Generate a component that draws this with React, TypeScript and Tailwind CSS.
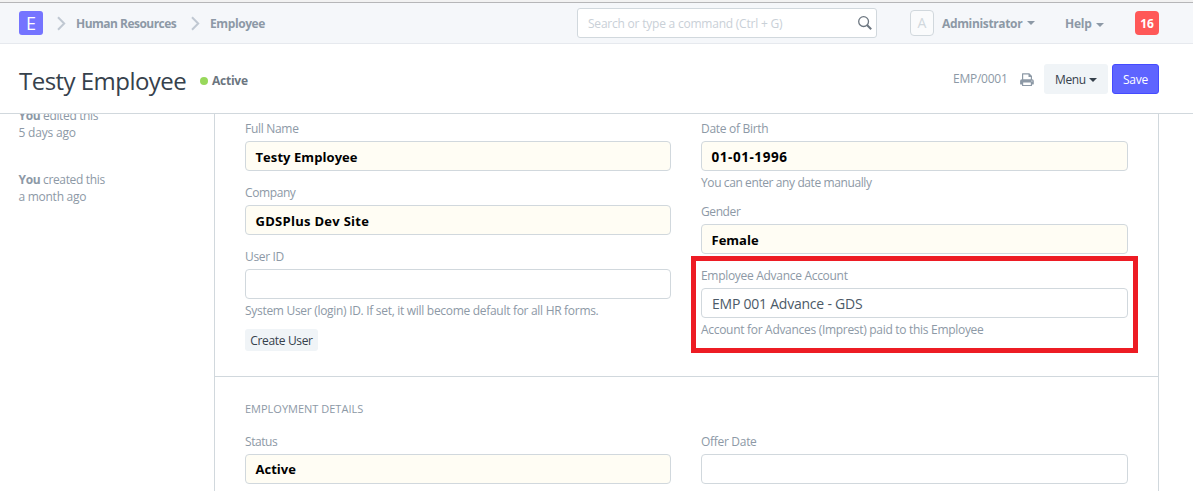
import type { ReactNode } from 'react';

function Chevron() {
  return (
    <svg width="9" height="15" viewBox="0 0 9 15" fill="none" stroke="#c0c8d2" strokeWidth="2">
      <path d="M1 1.2 L7.2 7.5 L1 13.8" />
    </svg>
  );
}

function Caret({ className }: { className: string }) {
  return (
    <svg className={className} width="8" height="4" viewBox="0 0 8 4" fill="currentColor">
      <path d="M0 0H8L4 4Z" />
    </svg>
  );
}

function PrinterIcon() {
  return (
    <svg width="14" height="14" viewBox="0 0 14 14" fill="#8d99a6">
      <path
        fillRule="evenodd"
        d="M2 0.8 Q2 0.3 2.5 0.3 H9.3 L12 3 V6.2 Q13.8 6.3 13.8 8 V11 Q13.8 11.4 13.4 11.4 H12 V12.6 Q12 13.1 11.5 13.1 H2.5 Q2 13.1 2 12.6 V11.4 H0.5 Q0.1 11.4 0.1 11 V8 Q0.1 6.3 2 6.2 Z M3.2 1.5 V6.3 H10.8 V3.9 H8.5 V1.5 Z M3.2 9.6 V11.9 H10.8 V9.6 Z M11.9 7.4 A0.6 0.6 0 1 0 11.9 8.6 A0.6 0.6 0 1 0 11.9 7.4 Z"
      />
    </svg>
  );
}

function SearchIcon() {
  return (
    <svg width="14" height="14" viewBox="0 0 14 14" fill="none" stroke="#6c7680">
      <circle cx="5.6" cy="5.6" r="4.9" strokeWidth="1.3" />
      <path d="M9 9L13.2 13.2" strokeWidth="2" />
    </svg>
  );
}

type FieldProps = {
  label: string;
  labelClass?: string;
  value?: string;
  valueClass?: string;
  bold?: boolean;
  help?: string;
  helpClass?: string;
  children?: ReactNode;
};

function Field({
  label,
  labelClass = 'tracking-[-0.3px]',
  value,
  valueClass = '',
  bold,
  help,
  helpClass = 'tracking-[-0.3px]',
  children,
}: FieldProps) {
  return (
    <div className="flex flex-col items-stretch">
      <div className="mb-1 h-[18px] text-xs leading-[19px] text-[#8d99a6]">
        <span className={labelClass}>{label}</span>
      </div>
      <div
        className={
          bold
            ? 'flex h-[30px] items-center rounded border border-[#d1d8dd] bg-[#fffdf4] px-[9.5px] pt-0.5 text-[13px] leading-[18px] font-bold text-black'
            : 'flex h-[30px] items-center rounded border border-[#d1d8dd] bg-white px-2.5 pt-0.5 text-[13.5px] leading-[18px] text-[#4c5a67]'
        }
      >
        <span className={valueClass}>{value}</span>
      </div>
      {help && (
        <div className="mt-[3px] h-[18px] text-xs leading-[18px] whitespace-nowrap text-[#8d99a6]">
          <span className={helpClass}>{help}</span>
        </div>
      )}
      {children}
    </div>
  );
}

export default function App() {
  return (
    <div className="flex h-[491px] w-[1193px] flex-col overflow-hidden bg-white font-['Open_Sans','Noto_Sans',sans-serif] text-xs leading-[17px] text-[#8d99a6]">
      <div className="h-[3px] shrink-0 border-b border-[#b6b6b8] bg-[#f2f2f2]" />
      <nav className="flex h-[41px] shrink-0 items-center border-b border-[#e6e9ee] bg-[#f5f7fa] pl-[19px] font-semibold">
        <div className="flex h-6 w-6 items-center justify-center rounded-[3px] bg-[#7574ff] text-[18px] leading-6 font-medium text-white">
          <span>E</span>
        </div>
        <div className="ml-[14px] flex">
          <Chevron />
        </div>
        <span className="mt-px ml-[10px] w-[102px] font-bold whitespace-nowrap tracking-[-0.52px]">Human Resources</span>
        <div className="ml-[13px] flex">
          <Chevron />
        </div>
        <span className="mt-px ml-[10px] w-14 font-bold whitespace-nowrap tracking-[-0.4px]">Employee</span>
        <div className="ml-auto flex h-[30px] w-[300px] shrink-0 items-center justify-between rounded-[3px] border border-[#d1d8dd] bg-white pr-[4px] pl-[10px] font-normal text-[#c9d0d7]">
          <span className="pt-px tracking-[-0.22px]">Search or type a command (Ctrl + G)</span>
          <SearchIcon />
        </div>
        <div className="ml-[33px] flex h-[26px] w-6 items-center justify-center rounded border border-[#d1d8dd] bg-[#fafbfc] text-sm font-normal text-[#d1d8dd]">
          A
        </div>
        <span className="mt-px ml-2 w-[80px] font-bold whitespace-nowrap tracking-[-0.35px]">Administrator</span>
        <Caret className="ml-[5px]" />
        <span className="mt-px ml-[30px] w-[27px] font-bold whitespace-nowrap tracking-[-0.2px]">Help</span>
        <Caret className="mt-[3px] ml-[4px]" />
        <div className="mr-[34px] ml-[31px] flex h-6 w-6 items-center justify-center rounded bg-[#ff5858] pt-px font-bold text-white">
          16
        </div>
      </nav>

      <header className="flex h-[70px] shrink-0 items-center border-b border-[#d1d8dd] pr-[34px] pl-[19px]">
        <h1 className="mt-1 w-[168px] text-2xl font-medium tracking-[-0.53px] whitespace-nowrap text-[#36414c]">Testy Employee</h1>
        <div className="mt-1 ml-[13px] h-2 w-2 rounded-full bg-[#98d85b]" />
        <span className="mt-1 ml-1 font-bold tracking-[-0.25px] text-[#6c7680]">Active</span>
        <span className="ml-auto w-[55px] tracking-[-0.25px] whitespace-nowrap">EMP/0001</span>
        <div className="mt-0.5 mr-[10px] ml-[12px]">
          <PrinterIcon />
        </div>
        <div className="flex h-[30px] w-16 items-center rounded-[3px] bg-[#f0f4f7] pl-[11px] text-[#36414c]">
          <span className="mt-0.5 w-[31px] tracking-[-0.4px]">Menu</span>
          <Caret className="mt-0.5 ml-[3px]" />
        </div>
        <div className="ml-1 flex h-[30px] w-[47px] items-center justify-center rounded-[3px] border border-[#444bff] bg-[#5e64ff] pt-0.5 tracking-[-0.2px] text-white">
          Save
        </div>
      </header>

      <main className="flex h-[377px] shrink-0 overflow-hidden">
        <aside className="w-[214px] shrink-0 pl-[18.5px] tracking-[-0.35px]">
          <div className="-mt-[7px]">
            <p><b>You</b> edited this</p>
            <p className="tracking-[-0.2px]">5 days ago</p>
          </div>
          <div className="mt-[30px]">
            <p><b>You</b> created this</p>
            <p className="tracking-[-0.27px]">a month ago</p>
          </div>
        </aside>
        <div className="flex w-[945px] shrink-0 flex-col border-x border-[#d1d8dd]">
          <section className="grid h-[263px] shrink-0 grid-cols-[426px_427px] gap-x-[30px] border-b border-[#d1d8dd] px-[30px] pt-[5px]">
            <div className="flex flex-col gap-3">
              <Field label="Full Name" value="Testy Employee" valueClass="tracking-[0.07px]" bold />
              <Field label="Company" labelClass="tracking-[-0.4px]" value="GDSPlus Dev Site" valueClass="tracking-[0.28px]" bold />
              <Field
                label="User ID"
                labelClass="tracking-[-0.35px]"
                help="System User (login) ID. If set, it will become default for all HR forms."
              >
                <div className="mt-[9px] flex h-[22px] w-[73px] items-center justify-center rounded-[3px] bg-[#f0f4f7] pt-px tracking-[-0.35px] whitespace-nowrap text-[#36414c]">
                  Create User
                </div>
              </Field>
            </div>
            <div className="flex flex-col">
              <Field
                label="Date of Birth"
                value="01-01-1996"
                valueClass="text-[13.5px] tracking-[0.55px]"
                bold
                help="You can enter any date manually"
                helpClass="tracking-[-0.4px]"
              />
              <div className="mt-[10px]">
                <Field label="Gender" labelClass="tracking-[-0.4px]" value="Female" bold />
              </div>
              <div className="-mx-[10px] mt-0.5 h-[97px] border-5 border-[#ed1c24] px-[5px] pt-[5px]">
                <Field
                  label="Employee Advance Account"
                  value="EMP 001 Advance - GDS"
                  valueClass="text-sm leading-[18px] tracking-[-0.23px]"
                  help="Account for Advances (Imprest) paid to this Employee"
                />
              </div>
            </div>
          </section>
          <section className="px-[30px] pt-[23px]">
            <h2 className="h-[18px] text-[11px] leading-[18px]">EMPLOYMENT DETAILS</h2>
            <div className="mt-[14px] grid grid-cols-[426px_427px] gap-x-[30px]">
              <Field label="Status" labelClass="tracking-[-0.45px]" value="Active" valueClass="pb-0.5" bold />
              <Field label="Offer Date" />
            </div>
          </section>
        </div>
      </main>
    </div>
  );
}
